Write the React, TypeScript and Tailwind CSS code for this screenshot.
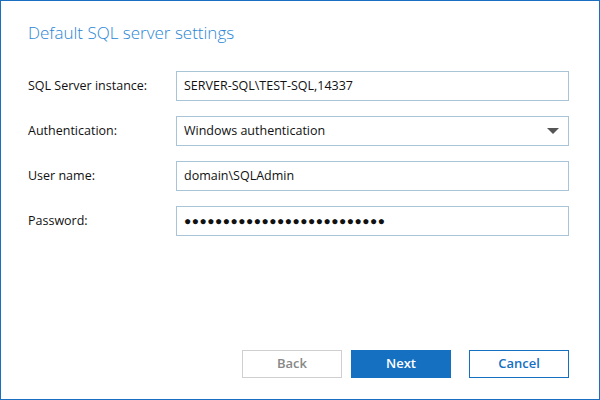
import React from 'react';

const font = { fontFamily: '"Open Sans", "Noto Sans", sans-serif' };

const Field: React.FC<{ label: string; children: React.ReactNode }> = ({ label, children }) => (
  <div className="flex items-center h-[30px]">
    <label className="w-[148px] shrink-0 text-[12.5px] text-[#111]">{label}</label>
    {children}
  </div>
);

const boxCls =
  'flex-1 h-[30px] border border-[#a9c3d7] bg-white flex items-center px-[7px] text-[12.5px] text-[#111]';

export default function App() {
  return (
    <div
      className="w-[600px] h-[400px] border border-[#1a6fc0] bg-white flex flex-col"
      style={font}
    >
      <h1 className="pl-[27px] pt-[20px] text-[17px] font-light text-[#2a86d4] leading-[24px]">
        Default SQL server settings
      </h1>

      <div className="mt-[26px] pl-[27px] pr-[30px] flex flex-col gap-[15px]">
        <Field label="SQL Server instance:">
          <div className={boxCls}>SERVER-SQL\TEST-SQL,14337</div>
        </Field>
        <Field label="Authentication:">
          <div className={boxCls + ' justify-between'}>
            <span>Windows authentication</span>
            <svg width="12" height="7" viewBox="0 0 12 7" className="mr-[2px]">
              <path d="M0 0 L12 0 L6 6 Z" fill="#555" />
            </svg>
          </div>
        </Field>
        <Field label="User name:">
          <div className={boxCls}>domain\SQLAdmin</div>
        </Field>
        <Field label="Password:">
          <div className={boxCls}>
            <span className="tracking-[0.5px] text-[12px]">{'●'.repeat(26)}</span>
          </div>
        </Field>
      </div>

      <div className="mt-auto mb-[21px] pr-[30px] flex justify-end gap-[9px]">
        <button className="w-[100px] h-[28px] border border-[#cfcfcf] text-[#888] text-[13px] font-semibold bg-white">
          Back
        </button>
        <button className="w-[100px] h-[28px] bg-[#1670c2] text-white text-[13px] font-semibold">
          Next
        </button>
        <button className="ml-[9px] w-[100px] h-[28px] border border-[#1670c2] text-[#1670c2] text-[13px] font-semibold bg-white">
          Cancel
        </button>
      </div>
    </div>
  );
}
